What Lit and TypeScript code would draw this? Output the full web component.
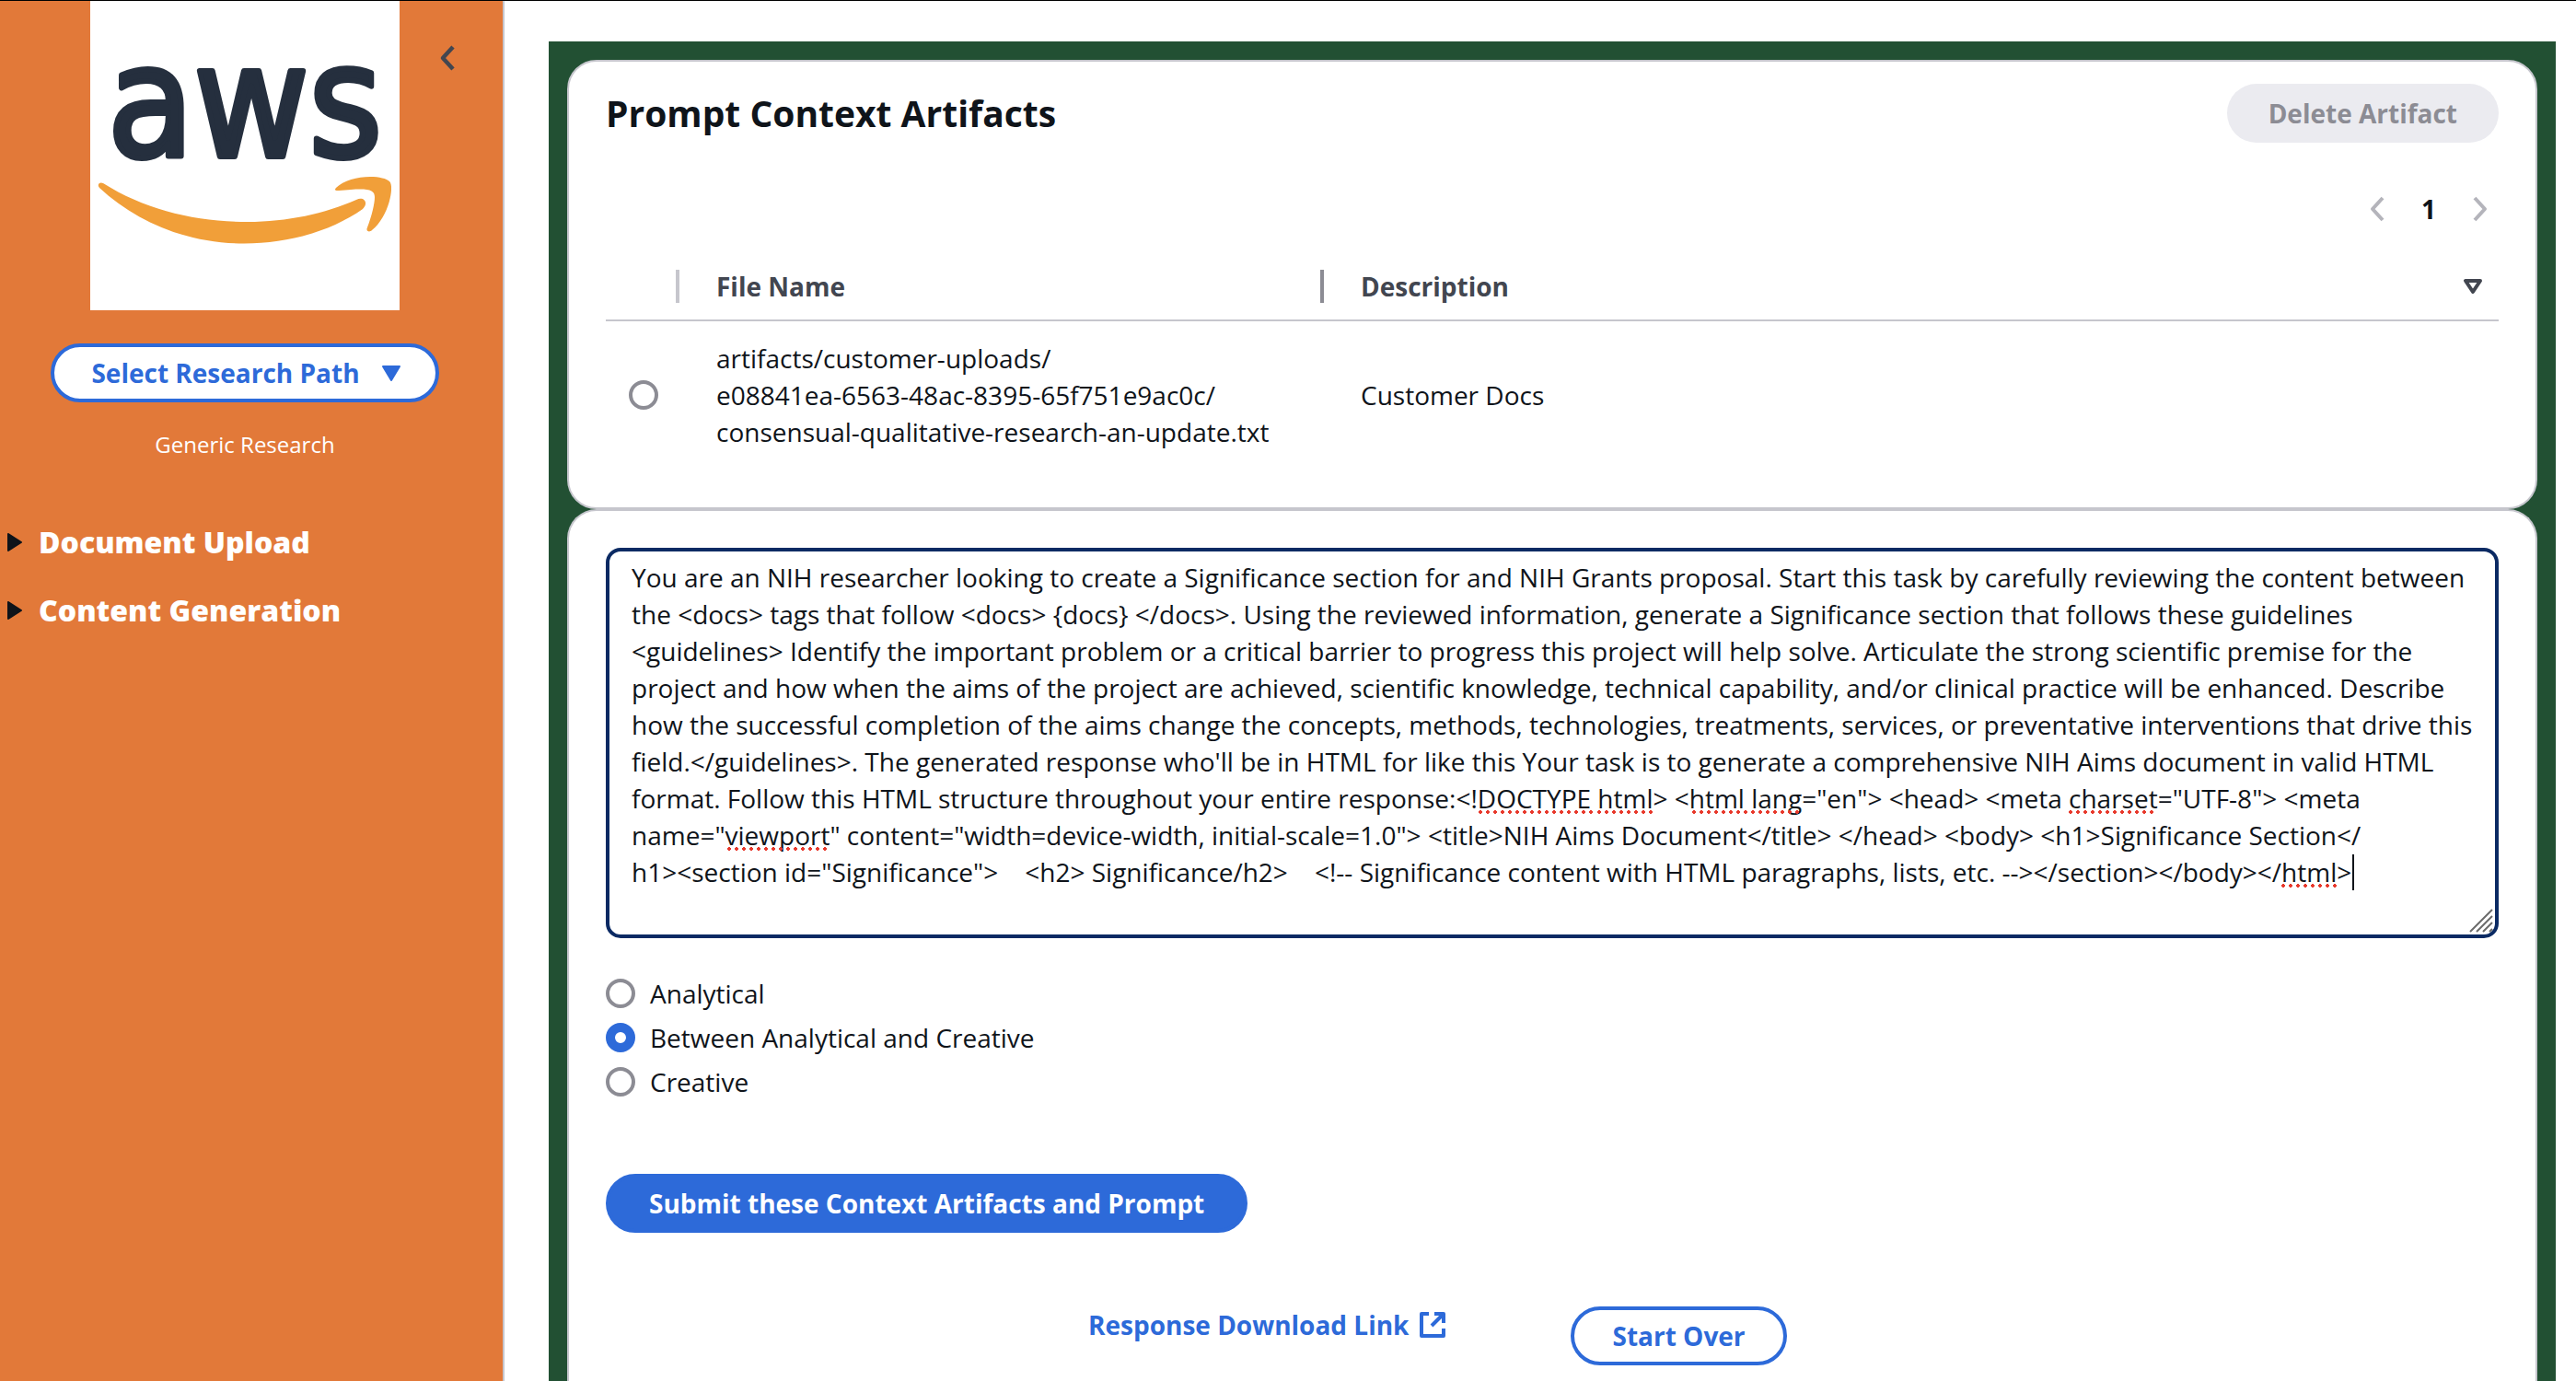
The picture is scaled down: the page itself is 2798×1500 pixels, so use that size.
import { LitElement, html, css, svg } from "lit";
import { customElement, property, state } from "lit/decorators.js";
import { styleMap } from "lit/directives/style-map.js";

const PROMPT =
  "You are an NIH researcher looking to create a Significance section for and NIH Grants proposal. Start this task by carefully reviewing the content between the <docs> tags that follow <docs> {docs} </docs>. Using the reviewed information, generate a Significance section that follows these guidelines <guidelines> Identify the important problem or a critical barrier to progress this project will help solve. Articulate the strong scientific premise for the project and how when the aims of the project are achieved, scientific knowledge, technical capability, and/or clinical practice will be enhanced. Describe how the successful completion of the aims change the concepts, methods, technologies, treatments, services, or preventative interventions that drive this field.</guidelines>. The generated response who'll be in HTML for like this Your task is to generate a comprehensive NIH Aims document in valid HTML format. Follow this HTML structure throughout your entire response:<!DOCTYPE html> <html lang=\"en\"> <head> <meta charset=\"UTF-8\"> <meta name=\"viewport\" content=\"width=device-width, initial-scale=1.0\"> <title>NIH Aims Document</title> </head> <body> <h1>Significance Section</\nh1><section id=\"Significance\">    <h2> Significance/h2>    <!-- Significance content with HTML paragraphs, lists, etc. --></section></body></html>";

interface Mark {
  line: number;
  x: number;
  width: number;
}

/* Spelling marks: text line, distance from the box's left edge, width. */
const MARKS: Mark[] = [
  { line: 7, x: 948, width: 124 },
  { line: 7, x: 1077, width: 60 },
  { line: 7, x: 1180, width: 60 },
  { line: 7, x: 1244, width: 52 },
  { line: 7, x: 1589, width: 96 },
  { line: 8, x: 132, width: 108 },
  { line: 9, x: 1820, width: 60 },
];

@customElement("research-sidebar")
export class ResearchSidebar extends LitElement {
  static styles = css`
    :host {
      display: block;
      box-sizing: border-box;
      background: #e27939;
      border-right: 2px solid #c6c6cd;
      color: #fff;
    }
    .top {
      display: flex;
      align-items: flex-start;
      gap: 36px;
      padding-left: 98px;
    }
    .logo {
      display: block;
      width: 336px;
      height: 336px;
      background: #fff;
    }
    .wordmark {
      font-family: "DejaVu Sans Condensed", "DejaVu Sans", sans-serif;
      font-size: 170px;
      fill: #252f3e;
      stroke: #252f3e;
      stroke-width: 6px;
      stroke-linejoin: round;
    }
    button {
      font: inherit;
      cursor: pointer;
    }
    .collapse {
      display: flex;
      margin-top: 44px;
      padding: 0;
      border: 0;
      background: none;
    }
    .path {
      display: flex;
      flex-direction: column;
      align-items: center;
      gap: 30px;
      padding: 36px 14px 0 0;
    }
    .select {
      display: flex;
      align-items: center;
      gap: 24px;
      box-sizing: border-box;
      height: 64px;
      padding: 0 38px 0 40px;
      border: 4px solid #2d6ad9;
      border-radius: 32px;
      background: #fff;
      color: #2d6ad9;
      font-weight: 700;
    }
    .chosen {
      font-size: 24px;
      line-height: 32px;
    }
    .nav {
      display: flex;
      flex-direction: column;
      gap: 34px;
      padding: 70px 0 0 8px;
    }
    .section {
      display: flex;
      align-items: center;
      gap: 17px;
      padding: 0;
      border: 0;
      background: none;
      color: #fff;
      font-size: 32px;
      line-height: 40px;
      font-weight: 800;
    }
  `;

  @property({ type: Array }) sections: string[] = [];

  render() {
    return html`
      <div class="top">
        <svg class="logo" viewBox="0 0 336 336" role="img" aria-label="aws">
          <text class="wordmark" x="168" y="169" text-anchor="middle">aws</text>
          <g fill="#f19f39">
            <path
              d="M14 198C60 227 115 240 171 240C214 240 255 231 289 216C297 212 303 219 296 226C262 250 215 263.5 167 263.5C105 263.5 50 240 10 203C7 200 10 196 14 198Z"
            />
            <path
              d="M267 203C275 195 290 191 304 191C314 191 322 193 325 196C331 201 324 235 306 249C303 252 299 250 301 246C306 233 309 220 309 213C309 204 300 203 270 206C266 206.5 265 205 267 203Z"
            />
          </g>
        </svg>
        <button class="collapse" aria-label="Collapse">
          <svg width="32" height="36" viewBox="0 0 32 36" fill="none" stroke="#424650" stroke-width="4.5">
            <path d="M22 6L11 18L22 30" stroke-linejoin="round" />
          </svg>
        </button>
      </div>
      <div class="path">
        <button class="select">
          Select Research Path
          <svg width="20" height="18" viewBox="0 0 20 18" fill="#2d6ad9" stroke="#2d6ad9" stroke-width="2" stroke-linejoin="round">
            <path d="M1 2H19L10 17Z" />
          </svg>
        </button>
        <div class="chosen">Generic Research</div>
      </div>
      <nav class="nav">
        ${this.sections.map(
          (name) => html`
            <button class="section" aria-expanded="false">
              <svg width="17" height="20" viewBox="0 0 17 20" fill="#0f141a" stroke="#0f141a" stroke-width="2" stroke-linejoin="round">
                <path d="M1 1V19L15 10Z" />
              </svg>
              ${name}
            </button>
          `,
        )}
      </nav>
    `;
  }
}

@customElement("artifact-card")
export class ArtifactCard extends LitElement {
  static styles = css`
    :host {
      display: block;
      box-sizing: border-box;
      padding: 24px 40px 62px;
      border: 2px solid #c6c6cd;
      border-radius: 32px;
      background: #fff;
    }
    .head {
      display: flex;
      align-items: center;
      justify-content: space-between;
    }
    h2 {
      margin: 0;
      font-size: 39px;
      line-height: 48px;
      font-weight: 700;
    }
    button {
      font: inherit;
    }
    .delete {
      height: 64px;
      padding: 0 45px;
      border: 0;
      border-radius: 32px;
      background: #ebebf0;
      color: #8c8c94;
      font-weight: 700;
    }
    .pages {
      display: flex;
      align-items: center;
      justify-content: flex-end;
      gap: 36px;
      margin: 52px 8px 36px 0;
    }
    .page {
      display: flex;
      align-items: center;
      justify-content: center;
      height: 40px;
      padding: 0;
      border: 0;
      background: none;
      color: #0f141a;
      font-weight: 700;
    }
    table {
      width: 100%;
      table-layout: fixed;
      border-collapse: separate;
      border-spacing: 0;
    }
    .pick-col {
      width: 80px;
    }
    .name-col {
      width: 700px;
    }
    th {
      padding: 8px 0 16px 40px;
      border-bottom: 2px solid #c6c6cd;
      color: #424650;
      font-weight: 700;
      text-align: left;
    }
    .pick-head {
      padding-left: 0;
    }
    .cell {
      display: flex;
      align-items: center;
      justify-content: space-between;
      height: 40px;
    }
    .divider {
      width: 4px;
      height: 36px;
      margin-left: auto;
      background: #c6c6cd;
    }
    .divider.strong {
      background: #8c8c94;
    }
    .sort {
      margin-right: 16px;
    }
    td {
      padding: 20px 0 0 40px;
      vertical-align: middle;
    }
    .pick {
      padding-left: 25px;
    }
    .line {
      display: block;
    }
    input {
      display: block;
      appearance: none;
      box-sizing: border-box;
      width: 32px;
      height: 32px;
      margin: 0;
      border: 4px solid #8c8c94;
      border-radius: 50%;
      background: #fff;
    }
  `;

  @property({ type: Array }) path: string[] = [];
  @property() description = "";

  private chevron(d: string) {
    return html`<svg width="24" height="32" viewBox="0 0 24 32" fill="none" stroke="#b4b4bb" stroke-width="4" stroke-linejoin="round">${svg`<path d=${d} />`}</svg>`;
  }

  render() {
    return html`
      <div class="head">
        <h2>Prompt Context Artifacts</h2>
        <button class="delete" disabled>Delete Artifact</button>
      </div>
      <div class="pages">
        <button class="page" aria-label="Previous page" disabled>${this.chevron("M18 4L7 16L18 28")}</button>
        <button class="page">1</button>
        <button class="page" aria-label="Next page" disabled>${this.chevron("M6 4L17 16L6 28")}</button>
      </div>
      <table>
        <colgroup>
          <col class="pick-col" />
          <col class="name-col" />
          <col />
        </colgroup>
        <thead>
          <tr>
            <th class="pick-head"><div class="cell"><span class="divider"></span></div></th>
            <th><div class="cell">File Name<span class="divider strong"></span></div></th>
            <th>
              <div class="cell">
                Description
                <svg class="sort" width="24" height="20" viewBox="0 0 24 20" fill="none" stroke="#424650" stroke-width="4" stroke-linejoin="round">
                  <path d="M4 4H20L12 16Z" />
                </svg>
              </div>
            </th>
          </tr>
        </thead>
        <tbody>
          <tr>
            <td class="pick"><input type="radio" name="artifact" aria-label=${this.path.join("")} /></td>
            <td>${this.path.map((part) => html`<span class="line">${part}</span>`)}</td>
            <td>${this.description}</td>
          </tr>
        </tbody>
      </table>
    `;
  }
}

@customElement("prompt-card")
export class PromptCard extends LitElement {
  static styles = css`
    :host {
      display: block;
      box-sizing: border-box;
      padding: 40px 40px 0;
      border: 2px solid #c6c6cd;
      border-bottom: 0;
      border-radius: 32px 32px 0 0;
      background: #fff;
    }
    .editor {
      position: relative;
      display: flex;
    }
    textarea {
      box-sizing: border-box;
      width: 100%;
      margin: 0;
      padding: 8px 24px;
      border: 4px solid #0b2a63;
      border-radius: 16px;
      outline: 0;
      background: #fff;
      color: #0f141a;
      font: inherit;
      resize: none;
      overflow: hidden;
    }
    .mark {
      position: absolute;
      height: 4px;
      background: radial-gradient(circle at 2px 2px, #e8382b 2px, transparent 2px) 0 0 / 8px 4px repeat-x;
    }
    .caret {
      position: absolute;
      top: 333px;
      left: 1897px;
      width: 2px;
      height: 39px;
      background: #0f141a;
    }
    .grip {
      position: absolute;
      right: 6px;
      bottom: 6px;
    }
    .modes {
      display: flex;
      flex-direction: column;
      align-items: flex-start;
      gap: 8px;
      margin: 40px 0 80px;
      padding: 0;
      border: 0;
    }
    label {
      display: flex;
      align-items: center;
      gap: 16px;
    }
    input {
      appearance: none;
      box-sizing: border-box;
      width: 32px;
      height: 32px;
      margin: 0;
      border: 4px solid #8c8c94;
      border-radius: 50%;
      background: #fff;
    }
    input:checked {
      border: 10px solid #2d6ad9;
    }
    .button {
      box-sizing: border-box;
      height: 64px;
      padding: 0 41px;
      border: 4px solid #2d6ad9;
      border-radius: 32px;
      background: #fff;
      color: #2d6ad9;
      font: inherit;
      font-weight: 700;
      cursor: pointer;
    }
    .button.primary {
      padding: 0 43px;
      background: #2d6ad9;
      color: #fff;
    }
    .results {
      display: flex;
      align-items: flex-start;
      gap: 134px;
      padding: 80px 0 16px 524px;
    }
    a {
      display: flex;
      align-items: center;
      gap: 10px;
      color: #2d6ad9;
      font-weight: 700;
      text-decoration: none;
    }
  `;

  @property({ type: Array }) modes: string[] = [];
  @state() private mode = 1;

  render() {
    return html`
      <div class="editor">
        <textarea rows="10" aria-label="Prompt" spellcheck="false" .value=${PROMPT}></textarea>
        ${MARKS.map(
          (m) =>
            html`<span
              class="mark"
              style=${styleMap({ left: `${m.x}px`, top: `${m.line * 40 + 5}px`, width: `${m.width}px` })}
            ></span>`,
        )}
        <span class="caret"></span>
        <svg class="grip" width="26" height="26" viewBox="0 0 26 26" fill="none" stroke="#6b6b6b" stroke-width="2">
          <path d="M1 25L25 1M8 25L25 8M15 25L25 15M22 25L25 22" />
        </svg>
      </div>
      <fieldset class="modes" aria-label="Response style">
        ${this.modes.map(
          (name, i) => html`
            <label>
              <input type="radio" name="mode" .checked=${i === this.mode} @change=${() => (this.mode = i)} />
              ${name}
            </label>
          `,
        )}
      </fieldset>
      <button class="button primary">Submit these Context Artifacts and Prompt</button>
      <div class="results">
        <a href="#response">
          Response Download Link
          <svg width="32" height="32" viewBox="0 0 32 32" fill="none" stroke="#2d6ad9" stroke-width="4">
            <path d="M12 4H4V28H28V20M18 4H28V14M28 4L15 17" stroke-linejoin="round" />
          </svg>
        </a>
        <button class="button">Start Over</button>
      </div>
    `;
  }
}

@customElement("app-root")
export class AppRoot extends LitElement {
  static styles = css`
    :host {
      display: flex;
      box-sizing: border-box;
      min-height: 100vh;
      border-top: 1px solid #000;
      background: #fff;
      color: #0f141a;
      font-family: "Open Sans", "Noto Sans", sans-serif;
      font-size: 28px;
      line-height: 40px;
    }
    .side {
      flex: 0 0 548px;
    }
    .main {
      display: flex;
      flex: 1;
      min-width: 0;
      padding: 44px 22px 0 48px;
    }
    .panel {
      display: flex;
      flex: 1;
      flex-direction: column;
      min-width: 0;
      padding: 20px 20px 0;
      background: #225033;
    }
    .prompt {
      flex: 1;
    }
  `;

  render() {
    return html`
      <research-sidebar class="side" .sections=${["Document Upload", "Content Generation"]}></research-sidebar>
      <main class="main">
        <div class="panel">
          <artifact-card
            .path=${[
              "artifacts/customer-uploads/",
              "e08841ea-6563-48ac-8395-65f751e9ac0c/",
              "consensual-qualitative-research-an-update.txt",
            ]}
            description="Customer Docs"
          ></artifact-card>
          <prompt-card
            class="prompt"
            .modes=${["Analytical", "Between Analytical and Creative", "Creative"]}
          ></prompt-card>
        </div>
      </main>
    `;
  }
}
